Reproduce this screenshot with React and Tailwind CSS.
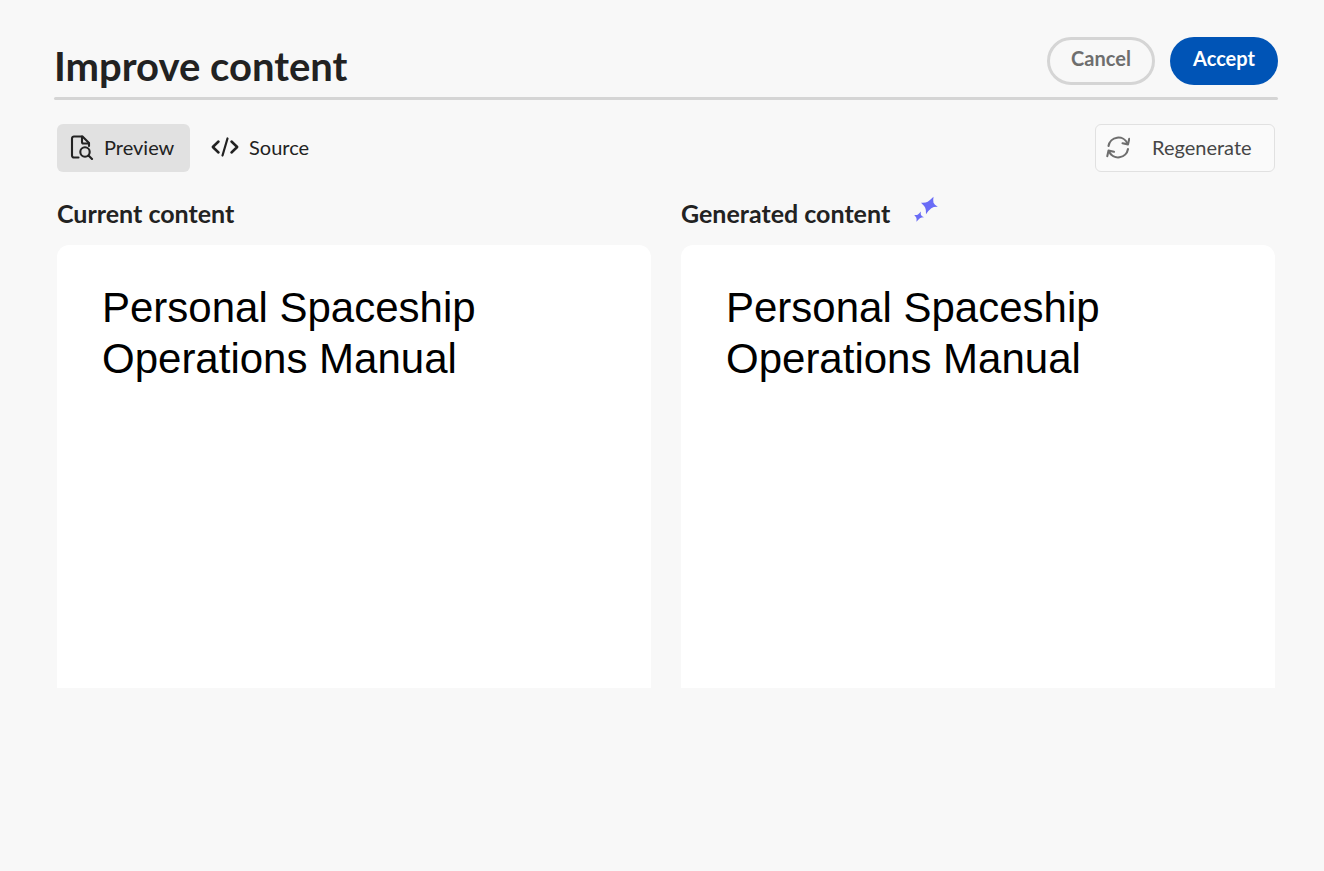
function PreviewIcon() {
  return (
    <svg width="24" height="26" viewBox="0 0 24 26" fill="none" stroke="currentColor" strokeWidth="2.100" strokeLinecap="round" strokeLinejoin="round" aria-hidden="true">
      <path d="M8.500 23.500H4a2 2 0 0 1-2-2V4.500a2 2 0 0 1 2-2h8.500L19 9V12" />
      <path d="M12 2.500v5.500a1.500 1.500 0 0 0 1.500 1.500H19" />
      <circle cx="15" cy="18" r="4.700" />
      <path d="M18.500 21.500L22 25" />
    </svg>
  );
}

function SourceIcon() {
  return (
    <svg width="28" height="22" viewBox="0 0 28 22" fill="none" stroke="currentColor" strokeWidth="2.500" strokeLinecap="round" strokeLinejoin="round" aria-hidden="true">
      <path d="M7.500 5.500L1.800 11l5.700 5.500M20.500 5.500l5.700 5.500-5.700 5.500" />
      <path d="M16.500 2.500l-5 17" strokeWidth="2.200" />
    </svg>
  );
}

function RefreshIcon() {
  return (
    <svg width="24" height="24" viewBox="0 0 24 24" fill="none" stroke="currentColor" strokeWidth="2.100" strokeLinecap="round" strokeLinejoin="round" aria-hidden="true">
      <path d="M2.500 11A10 10 0 0 1 21.500 8.500" />
      <path d="M16.500 8.200l5.500 1.200 1.200-5.500" />
      <path d="M22 14A10 10 0 0 1 3 16.500" />
      <path d="M8 16.800L2.500 15.600l-1.200 5.500" />
    </svg>
  );
}

function SparkleIcon() {
  return (
    <svg width="25" height="26" viewBox="0 0 25 26" fill="#6a6cf6" aria-hidden="true">
      <path d="M19.500 0.800Q18.900 5 19.500 6.700Q20.300 8.600 23.800 10.800Q19.500 10.700 17.300 12.200Q15 13.800 12 18.300Q12.300 13.700 11.200 11.700Q10.200 9.700 7 6.700Q11.500 7.100 13.700 5.700Q16 4.300 19.500 0.800Z" />
      <path d="M6.900 15.600Q6.500 17.800 7 18.900Q7.700 20.100 10 21.200Q7.300 21.300 5.900 22.200Q4.500 23.200 2.400 25.700Q2.900 23 2.300 21.800Q1.700 20.600 0.200 19Q2.800 19.300 4 18.500Q5.200 17.700 6.900 15.600Z" />
    </svg>
  );
}

function ContentPanel({ title, icon }) {
  return (
    <section className="min-w-0 flex-1">
      <div className="flex h-8 items-center gap-6">
        <h2 className="text-[25px] leading-8 font-bold">{title}</h2>
        {icon && <span className="mb-2">{icon}</span>}
      </div>
      <article className="mt-4 min-h-[443px] rounded-t-xl bg-white px-[45px] pt-[37px] font-['Liberation_Sans',sans-serif] text-black">
        <p className="max-w-[420px] text-[42px] leading-[51px]">Personal Spaceship Operations Manual</p>
      </article>
    </section>
  );
}

export default function App() {
  return (
    <main className="min-h-screen bg-[#f8f8f8] pt-[37px] pr-[46px] pb-10 pl-[54px] font-['Lato',sans-serif] text-[#222]">
      <header>
        <div className="flex justify-between">
          <h1 className="pt-0.5 pb-px text-[40px] leading-[54px] font-bold">Improve content</h1>
          <div className="flex gap-[15px]">
            <button type="button" className="h-12 w-[108px] rounded-full border-3 border-[#d5d5d5] pb-1.5 text-xl leading-6 font-bold text-[#6e6e6e]">Cancel</button>
            <button type="button" className="h-12 w-[108px] rounded-full bg-[#0054b6] pb-1.5 text-xl leading-6 font-bold text-white">Accept</button>
          </div>
        </div>
        <div className="mt-[3px] h-[3px] rounded-full bg-[#d5d5d5]" />
      </header>
      <div className="mt-6 flex justify-between px-[3px]">
        <div className="flex gap-2">
          <button type="button" aria-pressed="true" className="flex h-12 w-[133px] items-center gap-[10px] rounded-md bg-[#e1e1e1] pb-0.5 pl-[13px] text-xl"><PreviewIcon />Preview</button>
          <button type="button" aria-pressed="false" className="flex h-12 items-center gap-[10px] rounded-md px-[13px] pb-0.5 text-xl"><SourceIcon />Source</button>
        </div>
        <button type="button" className="flex h-12 w-[180px] items-center gap-[22px] rounded-md border border-[#e1e1e1] bg-[#fafafa] pb-0.5 pl-[10px] text-xl text-[#464646]"><span className="text-[#6e6e6e]"><RefreshIcon /></span>Regenerate</button>
      </div>
      <div className="mt-[25px] flex gap-[30px] px-[3px]">
        <ContentPanel title="Current content" />
        <ContentPanel title="Generated content" icon={<SparkleIcon />} />
      </div>
    </main>
  );
}
